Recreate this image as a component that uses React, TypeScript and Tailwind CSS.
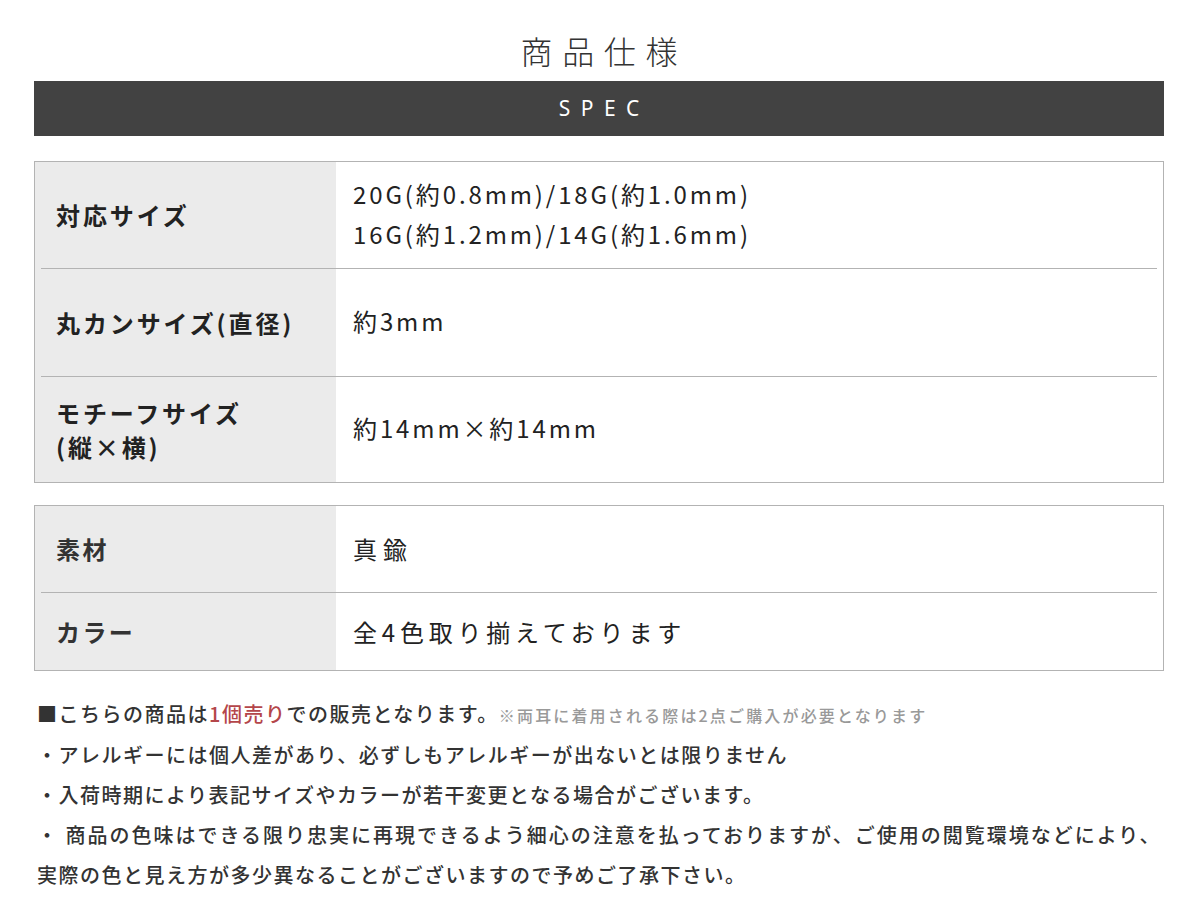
import React from "react";

const jp = "font-['Noto_Sans_CJK_JP','Noto_Sans',sans-serif]";

const specRows = [
  {
    label: ["対応サイズ"],
    value: ["20G(約0.8mm)/18G(約1.0mm)", "16G(約1.2mm)/14G(約1.6mm)"],
    h: "h-[107px]",
  },
  { label: ["丸カンサイズ(直径)"], value: ["約3mm"], h: "h-[108px]" },
  {
    label: ["モチーフサイズ", "(縦×横)"],
    value: ["約14mm×約14mm"],
    h: "h-[105px]",
  },
];

const materialRows = [
  { label: "素材", value: "真鍮", h: "h-[87px]", tracking: "tracking-[0.25em]" },
  {
    label: "カラー",
    value: "全4色取り揃えております",
    h: "h-[77px]",
    tracking: "tracking-[0.2em]",
  },
];

const App = () => {
  return (
    <div className={`${jp} w-[1199px] h-[918px] bg-white pl-[34px] pr-[35px] text-[#222]`}>
      <h1 className="pt-[27px] text-center text-[32px] leading-[46px] font-light tracking-[0.3em] text-[#333] pl-[0.3em]">
        商品仕様
      </h1>
      <div className="mt-[8px] h-[55px] bg-[#424242] flex items-center justify-center">
        <span className="text-white text-[21px] tracking-[0.5em] pl-[0.5em] font-['Noto_Sans',sans-serif]">
          SPEC
        </span>
      </div>

      {/* spec table */}
      <div className="mt-[25px] border border-[#b3b3b3] px-[6px] bg-[linear-gradient(to_right,#ebebeb_301px,#ffffff_301px)]">
        {specRows.map((row, i) => (
          <div
            key={i}
            className={`flex ${row.h} ${i < specRows.length - 1 ? "border-b border-[#b3b3b3]" : ""}`}
          >
            <div className="w-[295px] pl-[15px] flex flex-col justify-center text-[24px] leading-[34px] font-bold tracking-[0.12em] text-[#222]">
              {row.label.map((l) => (
                <div key={l}>{l}</div>
              ))}
            </div>
            <div className="flex-1 pl-[17px] pb-[3px] flex flex-col justify-center text-[24px] leading-[40px] tracking-[0.12em]">
              {row.value.map((v) => (
                <div key={v}>{v}</div>
              ))}
            </div>
          </div>
        ))}
      </div>

      {/* material table */}
      <div className="mt-[22px] border border-[#b3b3b3] px-[6px] bg-[linear-gradient(to_right,#ebebeb_301px,#ffffff_301px)]">
        {materialRows.map((row, i) => (
          <div
            key={i}
            className={`flex items-center ${row.h} ${i < materialRows.length - 1 ? "border-b border-[#b3b3b3]" : ""}`}
          >
            <div className="w-[295px] pl-[15px] text-[24px] font-bold tracking-[0.1em] text-[#333]">{row.label}</div>
            <div className={`flex-1 pl-[17px] text-[24px] ${row.tracking}`}>{row.value}</div>
          </div>
        ))}
      </div>

      {/* notes */}
      <div className="mt-[23px] pl-[3px] text-[20px] leading-[40px] font-medium text-[#333] tracking-[0.075em]">
        <p className="whitespace-nowrap">
          ■こちらの商品は<span className="text-[#b4464a]">1個売り</span>での販売となります。
          <span className="text-[16px] tracking-[0.135em] text-[#999]">※両耳に着用される際は2点ご購入が必要となります</span>
        </p>
        <p>・アレルギーには個人差があり、必ずしもアレルギーが出ないとは限りません</p>
        <p>・入荷時期により表記サイズやカラーが若干変更となる場合がございます。</p>
        <p className="tracking-[0.1em] whitespace-nowrap">
          ・ 商品の色味はできる限り忠実に再現できるよう細心の注意を払っておりますが、ご使用の閲覧環境などにより、
        </p>
        <p>実際の色と見え方が多少異なることがございますので予めご了承下さい。</p>
      </div>
    </div>
  );
};

export default App;
